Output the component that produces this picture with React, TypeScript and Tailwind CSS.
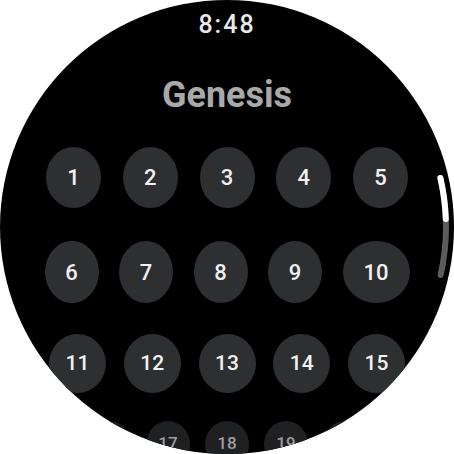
const rows = [
  { nums: [1, 2, 3, 4, 5], width: "w-[362px]", mt: "mt-[34px]", chip: "h-[61px] w-[55px] text-[22px]" },
  { nums: [6, 7, 8, 9, 10], width: "w-[365px]", mt: "mt-[33px]", chip: "h-[62px] w-[54px] text-[22px]" },
  { nums: [11, 12, 13, 14, 15], width: "w-[356px]", mt: "mt-[31px]", chip: "h-[59px] w-[57px] text-[21px]" },
];

const Chip = ({ n, className }: { n: number; className: string }) => (
  <div
    className={`flex items-center justify-center rounded-[50%] bg-[#2e2f31] font-medium text-[#f1f1f1] ${className} ${
      n === 10 ? "!w-[67px]" : ""
    }`}
  >
    {n}
  </div>
);

const ScrollIndicator = () => (
  <svg className="absolute inset-0 pointer-events-none" width={454} height={454} viewBox="0 0 454 454">
    <path d="M 440.4 178 A 219 219 0 0 1 440.6 275" fill="none" stroke="#5c5c5c" strokeWidth={6} strokeLinecap="round" />
    <path d="M 440.4 178 A 219 219 0 0 1 445.8 219" fill="none" stroke="#ffffff" strokeWidth={6} strokeLinecap="round" />
  </svg>
);

export default function App() {
  return (
    <div className="w-[454px] h-[454px] bg-white font-['Roboto',sans-serif]">
      <div className="relative w-full h-full rounded-full bg-black overflow-hidden flex flex-col items-center">
        <div className="mt-[12px] text-[25px] leading-[25px] font-medium tracking-[2px] text-[#e8e8e8]">8:48</div>
        <h1 className="mt-[40px] text-[36px] leading-[36px] font-bold text-[#a9a9a9]">Genesis</h1>

        {rows.map((row) => (
          <div key={row.nums[0]} className={`flex justify-between ${row.width} ${row.mt}`}>
            {row.nums.map((n) => (
              <Chip key={n} n={n} className={row.chip} />
            ))}
          </div>
        ))}

        {/* last row, scaled down near the bottom edge */}
        <div className="flex justify-between w-[280px] mt-[28px]">
          {[16, 17, 18, 19, 20].map((n) => (
            <div
              key={n}
              className="flex items-start justify-center pt-[12px] h-[47px] w-[44px] rounded-[50%] bg-[#1f2022] text-[17px] leading-[20px] font-medium text-[#9d9d9d]"
            >
              {n}
            </div>
          ))}
        </div>

        <ScrollIndicator />
      </div>
    </div>
  );
}
